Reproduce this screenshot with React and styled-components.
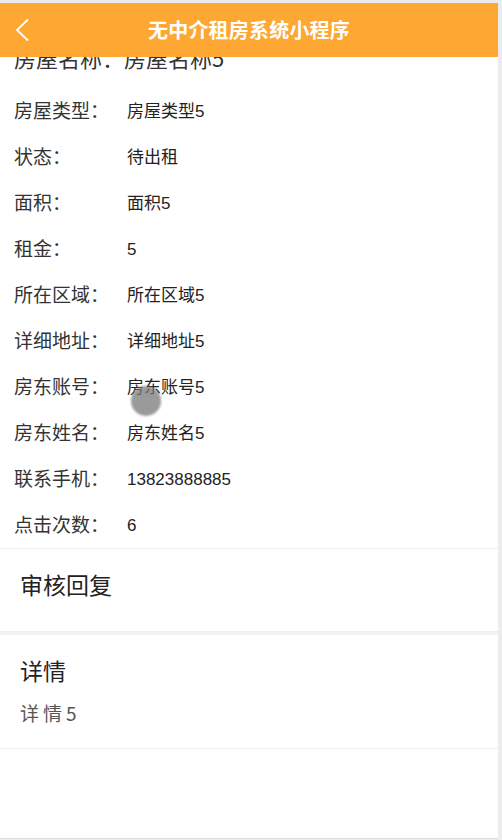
import React from 'react'
import styled, { createGlobalStyle } from 'styled-components'

const GlobalStyle = createGlobalStyle`
  html, body {
    margin: 0;
    padding: 0;
    background: #ececec;
  }
  body {
    font-family: "Liberation Sans", "Noto Sans CJK SC", sans-serif;
  }
`

const fields = [
  { label: '房屋类型：', value: '房屋类型5' },
  { label: '状态：', value: '待出租' },
  { label: '面积：', value: '面积5' },
  { label: '租金：', value: '5' },
  { label: '所在区域：', value: '所在区域5' },
  { label: '详细地址：', value: '详细地址5' },
  { label: '房东账号：', value: '房东账号5' },
  { label: '房东姓名：', value: '房东姓名5' },
  { label: '联系手机：', value: '13823888885' },
  { label: '点击次数：', value: '6' },
]

const App = () => {
  return (
    <>
      <GlobalStyle />
      <Frame>
        <Header>
          <Back>
            <svg width="16" height="24" viewBox="0 0 16 24">
              <path d="M14 1.5 L3 12 L14 22.5" fill="none" stroke="#fff" strokeWidth="1.8" />
            </svg>
          </Back>
          <Title>无中介租房系统小程序</Title>
        </Header>

        <Fields>
          <NameRow>房屋名称：房屋名称5</NameRow>
          {fields.map((f) => (
            <Row key={f.label}>
              <Label>{f.label}</Label>
              <Value>{f.value}</Value>
            </Row>
          ))}
        </Fields>

        <Section $height={83}>
          <SectionTitle>审核回复</SectionTitle>
        </Section>
        <Section $height={117} $gap>
          <SectionTitle>详情</SectionTitle>
          <SectionText>详情5</SectionText>
        </Section>

        <Touch />
      </Frame>
    </>
  )
}

const Frame = styled.div`
  position: relative;
  width: 498px;
  height: 835px;
  margin-top: 3px;
  background: #fff;
  overflow: hidden;
  border-bottom: 1px solid #dcdcdc;
`

const Header = styled.div`
  position: absolute;
  top: 0;
  left: 0;
  right: 0;
  height: 54px;
  background: #fea732;
  display: flex;
  align-items: center;
  justify-content: center;
  z-index: 2;
`

const Back = styled.div`
  position: absolute;
  left: 14px;
  top: 15px;
  display: flex;
`

const Title = styled.div`
  color: #fff;
  font-family: "Noto Sans CJK SC", sans-serif;
  font-weight: 700;
  font-size: 20px;
  letter-spacing: 0.2px;
  margin-top: -2px;
`

const Fields = styled.div`
  padding: 32px 0 1px 14px;
  border-bottom: 1px solid #eeeeee;
`

const NameRow = styled.div`
  height: 52px;
  line-height: 44px;
  font-family: "Noto Sans CJK SC", sans-serif;
  font-size: 22px;
  color: #333;
`

const Row = styled.div`
  height: 46px;
  display: flex;
  align-items: flex-start;
`

const Label = styled.div`
  width: 113px;
  padding-top: 1px;
  line-height: 44px;
  font-family: "Noto Sans CJK SC", sans-serif;
  font-size: 19px;
  color: #333;
`

const Value = styled.div`
  line-height: 44px;
  padding-top: 3px;
  font-family: "Liberation Sans", "Noto Sans CJK SC", sans-serif;
  font-size: 17px;
  color: #222;
`

const Section = styled.div`
  height: ${(p) => p.$height}px;
  box-sizing: border-box;
  padding: 20px 20px 0;
  border-bottom: 1px solid #eeeeee;
  border-top: ${(p) => (p.$gap ? '3px solid #f2f2f2' : 'none')};
`

const SectionTitle = styled.div`
  font-family: "Noto Sans CJK SC", sans-serif;
  font-size: 23px;
  color: #222;
  line-height: 30px;
`

const SectionText = styled.div`
  margin-top: 14px;
  font-family: "Noto Sans CJK SC", sans-serif;
  font-size: 19px;
  letter-spacing: 4px;
  color: #555;
`

const Touch = styled.div`
  position: absolute;
  left: 131px;
  top: 383px;
  width: 30px;
  height: 30px;
  border-radius: 50%;
  background: rgba(120, 120, 120, 0.75);
  filter: blur(1px);
  z-index: 3;
`

export default App
